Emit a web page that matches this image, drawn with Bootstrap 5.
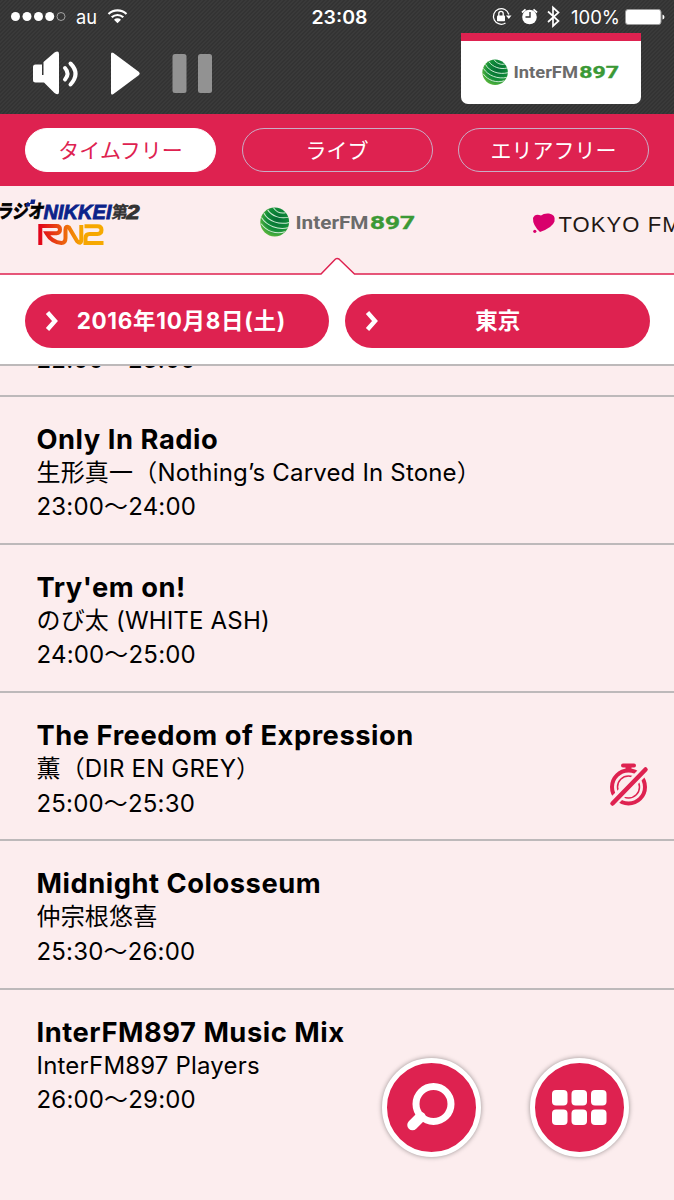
<!DOCTYPE html>
<html lang="ja">
<head>
<meta charset="utf-8">
<meta name="viewport" content="width=device-width, initial-scale=1">
<title>InterFM897</title>
<link href="https://cdn.jsdelivr.net/npm/bootstrap@5.3.0/dist/css/bootstrap.min.css" rel="stylesheet">
<style>
:root{--pink:#de2250;--pale:#fcedee;--line:#bdb9ba}
body{font-family:Inter,"Noto Sans CJK JP",sans-serif;background:var(--pale);color:#000;height:1200px;overflow:hidden}
svg{display:block;flex-shrink:0}
.topbar{height:114px;background:repeating-linear-gradient(135deg,#333 0 1.414px,#3a3a3a 1.414px 2.828px);color:#fff}
.station-card{left:461px;top:33px;width:180px;height:71px;background:#fff;border-top:8px solid var(--pink);border-radius:0 0 7px 7px}
.modes{height:72px;background:var(--pink);padding:14px 25px 0;gap:25.5px}
.mode{flex:1 1 0;height:44px;border:1px solid #c9adc6;border-radius:22px;color:#fff;font-size:21px;line-height:41px;padding:0;font-weight:400}
.mode.active{background:#fff!important;color:var(--pink)!important;border-color:#fff!important}
.carousel-strip{height:89px;background:var(--pale)}
.filters{height:90.5px;background:#fff;padding:18.5px 24.5px 0;gap:16px;border-bottom:2px solid var(--line)}
.filter-btn{flex:1 1 0;height:54px;border-radius:27px;background:var(--pink);color:#fff;font-size:22.5px;font-weight:700;line-height:52px;border:0;padding:0 20px}
.filter-btn .lbl{margin-right:13px}
.filter-btn .date-lbl{margin-right:5px;letter-spacing:.7px}
.prog{height:148.33px;border-top:2px solid var(--line);padding:26px 25px 0 36.5px}
.prog-cut{height:29px;padding-left:36.5px}
.prog-cut p{margin-top:-23px!important}
.prog h2{font-size:27.3px;font-weight:700;line-height:34px;margin:0;letter-spacing:.54px}
.prog p,.prog-cut p{font-size:24px;line-height:34px;margin:0;letter-spacing:.18px}
.prog .cast{margin:-1px 0 .5px}
.fab{top:1057.500px;width:99px;height:99px;border-radius:50%;background:var(--pink);border:5.5px solid #fff;box-shadow:0 0 5px rgba(0,0,0,.4);padding:0}
</style>
<script src="https://cdn.jsdelivr.net/npm/bootstrap@5.3.0/dist/js/bootstrap.bundle.min.js"></script>
</head>
<body>
<svg width="0" height="0" class="position-absolute" aria-hidden="true">
<defs>
<radialGradient id="gl" cx=".6" cy=".4" r=".65"><stop offset="0" stop-color="#036b35"/><stop offset=".6" stop-color="#118c39"/><stop offset="1" stop-color="#5db83c"/></radialGradient>
<linearGradient id="rn" gradientUnits="userSpaceOnUse" x1="38" y1="0" x2="103" y2="0"><stop offset="0" stop-color="#e1001a"/><stop offset=".3" stop-color="#e94a12"/><stop offset=".65" stop-color="#f6a400"/><stop offset="1" stop-color="#f6aa00"/></linearGradient>
<symbol id="interfm" viewBox="0 0 156 30">
<circle cx="14.700" cy="15" r="14.400" fill="url(#gl)"/>
<g fill="none" stroke="#cdebd3" stroke-width="1" transform="rotate(14 15 15)"><path d="M5 5C10 10 20 11 27 7"/><path d="M2 9C8 16 20 17 29 12"/><path d="M.8 14C8 21 20 22 29 17.500"/><path d="M2 20C9 26 19 27 27 22"/><path d="M10 1.500C14 5 19 5.500 23 3.500"/></g>
<g font-family="Roboto,sans-serif" font-weight="700" font-size="18.500"><text x="35.500" y="21.500" textLength="73" lengthAdjust="spacingAndGlyphs" fill="#6b6b6b">InterFM</text><text x="110" y="21.500" textLength="45" lengthAdjust="spacingAndGlyphs" fill="#3b9936" stroke="#3b9936" stroke-width=".4">897</text></g>
</symbol>
</defs>
</svg>

<header class="topbar position-relative">
<svg width="674" height="114" viewBox="0 0 674 114" fill="#fff" font-family="Inter,sans-serif">
<circle cx="15.500" cy="16.500" r="4.500"/><circle cx="27" cy="16.500" r="4.500"/><circle cx="38.500" cy="16.500" r="4.500"/><circle cx="49.700" cy="16.500" r="4.500"/><circle cx="61" cy="16.500" r="4" fill="none" stroke="#bbb" stroke-width=".8"/>
<text x="76" y="24" font-size="19" textLength="21" lengthAdjust="spacingAndGlyphs">au</text>
<g fill="none" stroke="#fff" stroke-width="2.200"><path d="M108.500 14a13 13 0 0 1 18 0"/><path d="M111.700 17.300a8.500 8.500 0 0 1 11.600 0"/></g><path d="M114 19.800a5 5 0 0 1 7 0l-3.500 3.500z"/>
<text x="311.500" y="24" font-size="19" font-weight="600" textLength="56" lengthAdjust="spacingAndGlyphs">23:08</text>
<g fill="none" stroke="#fff" stroke-width="1.300"><path d="M508.800 14.500A7.800 7.800 0 1 0 505.500 23"/><path d="M498.800 16v-2.500a2.200 2.200 0 0 1 4.400 0V16"/></g><rect x="497" y="15.500" width="8" height="5.800" rx=".8"/><path d="M506 15.500h5.500L508.800 19z"/>
<circle cx="529.500" cy="17" r="7.300"/><path d="M530 12v5h-4.500" fill="none" stroke="#363636" stroke-width="1.400"/><path d="M522 12.500l3.500-3.200M537 12.500l-3.500-3.200" stroke="#fff" stroke-width="1.800"/>
<path d="M548 11.500l10.500 9.500-5.500 5V7.500l5.500 5L548 22" fill="none" stroke="#fff" stroke-width="1.700"/>
<text x="571" y="24" font-size="19" textLength="49" lengthAdjust="spacingAndGlyphs">100%</text>
<rect x="625.500" y="9.500" width="35.500" height="15" rx="2.500" stroke="#999"/><path d="M662.500 14.500q2 .5 2 2.500t-2 2.500z"/>
<g><path d="M35.500 64.500H42V75h1.500V62l11-9.500Q59 50 59 54v38q0 4-4.500 1L44 82.500h-8.500Q33 82.500 33 80V67q0-2.500 2.500-2.500z"/><path d="M65 68q5 5.500 0 11.500M70.500 63.500q10 10 0 21" fill="none" stroke="#fff" stroke-width="4" stroke-linecap="round"/></g>
<path d="M111 54q0-2.500 2.500-1l25.500 19q1.500 1.500 0 3L113.500 94q-2.500 1.500-2.500-1z"/>
<g fill="#929292"><rect x="172.500" y="54" width="14" height="39" rx="2.500"/><rect x="198" y="54" width="14" height="39" rx="2.500"/></g>
</svg>
<div class="station-card position-absolute d-flex align-items-center justify-content-center"><svg width="138" height="26.500"><use href="#interfm"/></svg></div>
</header>

<nav class="modes d-flex"><button class="btn mode active">タイムフリー</button><button class="btn mode">ライブ</button><button class="btn mode">エリアフリー</button></nav>

<section class="carousel-strip d-flex justify-content-center overflow-hidden position-relative">
<svg width="267" height="88" viewBox="-63.500 186 267 88">
<g transform="translate(0 218) skewX(-9)" font-family="'Noto Sans CJK JP',sans-serif" font-weight="700"><text x="-4" y="0" font-size="19" textLength="47" lengthAdjust="spacingAndGlyphs" stroke="#000" stroke-width=".8">ラジオ</text><text x="110.500" y="-.5" font-size="16.500" textLength="16" lengthAdjust="spacingAndGlyphs" fill="#333" stroke="#333" stroke-width=".4">第</text></g>
<g font-family="'Liberation Sans',sans-serif" font-style="italic" font-weight="700"><text x="43" y="218.500" font-size="20" textLength="68" lengthAdjust="spacingAndGlyphs" fill="#0b238a" stroke="#0b238a" stroke-width=".8">NIKKEI</text><text x="126" y="218.500" font-size="20" textLength="13" lengthAdjust="spacingAndGlyphs" fill="#333" stroke="#333">2</text></g>
<path d="M30.500 199.500h4.500l-1 4.500h-4.500zM26 203h4l-1 3.500h-4z" fill="#0b238a"/>
<g fill="none" stroke="url(#rn)" stroke-width="4"><path d="M39.800 245v-19H56q3.500 0 3.500 3.500t-3.500 3.700H46Q51 242 61 243q4 0 4-5v-8.500q0-4 3.500-2l8 13.500q4 4 4.300-1V225"/><path d="M84 226.300h13q4 0 4 3.800t-4 3.900h-8q-4 0-4 4v5H103"/></g>
</svg>
<svg width="267" height="88" viewBox="203.500 186 267 88"><use href="#interfm" x="259.500" y="207" width="156" height="30"/></svg>
<svg width="267" height="88" viewBox="470.500 186 267 88"><path d="M539.500 232Q532 225 532.500 218q2-5 8-2.500 3-2.500 8-2 7 1 5.500 8-2 6-14.500 10.500z" fill="#d9006c"/><circle cx="534.300" cy="231.300" r="1.600" fill="#d9006c"/><text x="558" y="232.300" font-family="'Liberation Sans',sans-serif" font-size="22" textLength="122" fill="#231815">TOKYO FM</text></svg>
<svg class="position-absolute bottom-0 start-0" width="674" height="18" viewBox="0 0 674 18"><path d="M0 18V17.300H320L336 2q1.500-1 3 0L354 17.300H674V18z" fill="#fff"/><path d="M0 17H321L335.500 2q1.500-1 3.500 0L354.500 17H674" fill="none" stroke="#de2250" stroke-width="1.500"/></svg>
</section>

<div class="filters d-flex">
<button class="filter-btn d-flex align-items-center"><svg width="14" height="22" viewBox="0 0 14 22"><path d="M2.500 2.500L10 11 2.500 19.500" fill="none" stroke="#fff" stroke-width="4.400"/></svg><span class="lbl date-lbl flex-fill text-center">2016年10月8日(土)</span></button>
<button class="filter-btn d-flex align-items-center"><svg width="14" height="22" viewBox="0 0 14 22"><path d="M2.500 2.500L10 11 2.500 19.500" fill="none" stroke="#fff" stroke-width="4.400"/></svg><span class="lbl flex-fill text-center">東京</span></button>
</div>

<main>
<div class="prog-cut d-flex overflow-hidden align-items-start"><p>22:00〜23:00</p></div>
<article class="prog"><h2>Only In Radio</h2><p class="cast">生形真一（Nothing’s Carved In Stone）</p><p>23:00〜24:00</p></article>
<article class="prog"><h2>Try'em on!</h2><p class="cast">のび太 (WHITE ASH)</p><p>24:00〜25:00</p></article>
<article class="prog d-flex justify-content-between"><div><h2>The Freedom of Expression</h2><p class="cast">薫（DIR EN GREY）</p><p>25:00〜25:30</p></div>
<svg style="margin-top:42px" width="42" height="46" viewBox="607 761 42 46"><g fill="none" stroke="#de2250"><circle cx="628.500" cy="787" r="16.500" stroke-width="4"/><circle cx="628.500" cy="787" r="11" stroke-width="1.500"/><path d="M623 765.500h11" stroke-width="4" stroke-linecap="round"/><path d="M628.500 766v6" stroke-width="6"/><path d="M611 804l36-36" stroke="#fcedee" stroke-width="10"/><path d="M612.500 803.500l33-34" stroke-width="4.500" stroke-linecap="round"/></g></svg></article>
<article class="prog"><h2>Midnight Colosseum</h2><p class="cast">仲宗根悠喜</p><p>25:30〜26:00</p></article>
<article class="prog"><h2>InterFM897 Music Mix</h2><p class="cast">InterFM897 Players</p><p>26:00〜29:00</p></article>
</main>

<button class="fab position-absolute d-flex align-items-center justify-content-center" style="left:381.5px"><svg width="88" height="88" viewBox="387 1063 88 88"><circle cx="433.500" cy="1104" r="17.500" fill="none" stroke="#fff" stroke-width="7"/><path d="M420.500 1117l-8 8" stroke="#fff" stroke-width="10.500" stroke-linecap="round"/></svg></button>
<button class="fab position-absolute d-flex align-items-center justify-content-center" style="left:529.5px"><svg width="88" height="88" viewBox="535 1063 88 88" fill="#fff"><rect x="552" y="1090" width="15.500" height="15.500" rx="4"/><rect x="571.500" y="1090" width="15.500" height="15.500" rx="4"/><rect x="591" y="1090" width="15.500" height="15.500" rx="4"/><rect x="552" y="1109.500" width="15.500" height="15.500" rx="4"/><rect x="571.500" y="1109.500" width="15.500" height="15.500" rx="4"/><rect x="591" y="1109.500" width="15.500" height="15.500" rx="4"/></svg></button>
</body>
</html>
